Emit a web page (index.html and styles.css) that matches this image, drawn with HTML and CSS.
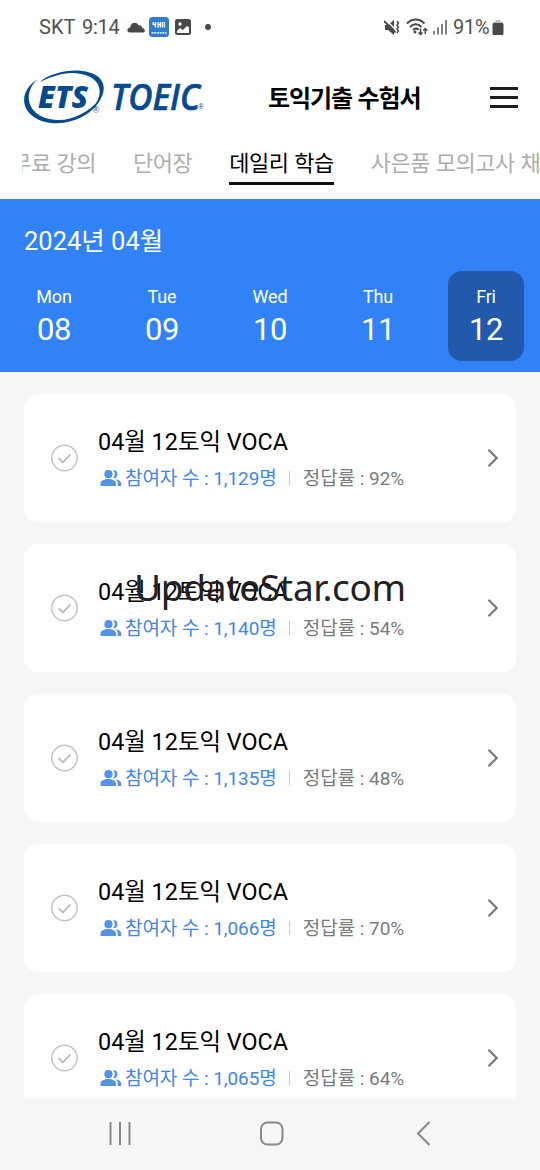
FILE: index.html
```html
<!DOCTYPE html>
<html lang="ko">
<head>
<meta charset="utf-8">
<title>토익기출 수험서</title>
<link rel="stylesheet" href="styles.css">
</head>
<body>
<svg class="defs" width="0" height="0">
  <symbol id="check" viewBox="0 0 28 28"><circle cx="14.500" cy="14" r="12.700" fill="none" stroke="#c2c5c7" stroke-width="1.500"/><path d="M8.700 14.200l4.200 4.200 7.600-8" fill="none" stroke="#bcc0c2" stroke-width="2"/></symbol>
  <symbol id="people" viewBox="0 0 22 16"><g fill="#5592ea"><circle cx="8.500" cy="4.200" r="4.100"/><path d="M.5 16v-2.500C.5 7.500 16 7.500 16 13.500V16zM13 .3c6-1.200 6 9 0 7.800 2.300-2.200 2.300-5.600 0-7.800zM15.500 9.300c3.400.5 5.700 2 5.700 4.200V16h-3.500v-2.500c0-1.700-.8-3.200-2.200-4.200z"/></g></symbol>
  <symbol id="next" viewBox="0 0 12 20"><path d="M1.500 1.800L9.700 10l-8.200 8.200" fill="none" stroke="#767a7d" stroke-width="2.200"/></symbol>
</svg>
<div class="screen">
  <div class="status">
    <span class="carrier">SKT</span><span class="clock">9:14</span>
    <svg class="cloud" width="18" height="11" viewBox="0 0 18 11"><path fill="#484848" d="M2.800 10.500C-.5 10.500-.5 6 3 5.700 3.500 1 9-1.300 11.500 3.200c2-.4 3.500.9 3.700 2.700 3.500.4 3.300 4.600.8 4.600z"/></svg>
    <svg class="appicon" width="20" height="20" viewBox="0 0 20 20"><rect width="20" height="20" rx="3.500" fill="#347bc9"/><path d="M4.200 5v2.500h2M6.500 5v5.500M9 5v5.500M9 7.700h2M11.300 5v5.500M13.300 5v5.500M15.300 5v5.500" fill="none" stroke="#fff" stroke-width="1.300"/><path d="M2.500 15.800h15" stroke="#d5e5f7" stroke-width="1.700" stroke-dasharray="2 .7"/></svg>
    <svg class="photo" width="16" height="16" viewBox="0 0 16 16"><rect x="1" y="1" width="14" height="14" rx="1.500" fill="#fff" stroke="#484848" stroke-width="2"/><path d="M1 1h14v8l-3-2-4 4-3-2-4 4z" fill="#484848"/><circle cx="5" cy="5" r="1.700" fill="#fff"/></svg>
    <span class="dot"></span>
    <span class="spacer"></span>
    <svg width="16" height="17" viewBox="0 0 16 17"><path d="M1 6h3l6-5v15l-6-5H1z" fill="#484848"/><path d="M2 1l11 11" stroke="#fff" stroke-width="1.500"/><path d="M0 2l11.500 11.500" stroke="#484848" stroke-width="1.800"/><path d="M13 2l1.500 2-1.500 2 1.500 2-1.500 2 1.500 2-1.500 2" fill="none" stroke="#484848" stroke-width="1.400"/></svg>
    <svg class="wifi" width="22" height="18" viewBox="0 0 22 18"><g fill="none" stroke="#484848" stroke-width="2"><path d="M1 5.500c5-5.300 12.500-5.300 17.500 0M4 9c3.500-3.700 8-3.700 11.500 0M7 12c2-1.700 4-1.700 5.500-.3"/><path d="M14.500 10.500v6m-2-2l2 2 2-2M19.300 16v-5.500m-2 2l2-2 2 2" stroke-width="1.500"/></g><circle cx="9" cy="14" r="1.500" fill="#484848"/></svg>
    <svg class="signal" width="14" height="16" viewBox="0 0 14 16"><path d="M1 12v3.500M5 8.500v7M9 5v10.500M13 1v14.500" stroke="#555" stroke-width="1.500"/></svg>
    <span class="percent">91%</span>
    <svg class="battery" width="12" height="17" viewBox="0 0 12 17"><path d="M3.500 1h5v2H11v3H1V3h2.500z" fill="#bbb"/><rect x=".5" y="4" width="11" height="12" rx="1.500" fill="#484848"/></svg>
  </div>
  <header class="header">
    <svg class="logo" width="184" height="56" viewBox="0 0 184 56">
      <g fill="#064a8e">
        <path d="M15 10C-7 23-3 50 28 54 52 56 72 43 78 29 65 44 49 52 33 51 3 49-1 23 15 10z"/>
        <path d="M17 13C25 5 46 0 59 2 81 4 87 20 74 35c-1 2-3 4-5 5C83 24 77 8 58 5 44 2 30 7 17 13z"/>
        <text class="logo-text" x="15" y="39" font-size="30" textLength="50" lengthAdjust="spacingAndGlyphs">ETS</text>
        <text class="logo-text toeic" x="88" y="41" font-size="36" textLength="89" lengthAdjust="spacingAndGlyphs">TOEIC</text>
        <text class="reg" x="69.500" y="43.500" font-size="9">®</text>
        <text class="reg" x="175" y="39.500" font-size="8">®</text>
      </g>
    </svg>
    <h1 class="title">토익기출 수험서</h1>
    <span class="menu"><i class="bar"></i><i class="bar"></i><i class="bar"></i></span>
  </header>
  <nav class="tabs"><span class="tab first">무료 강의</span><span class="tab">단어장</span><span class="tab active">데일리 학습</span><span class="tab">사은품 모의고사 채점</span></nav>
  <section class="calendar">
    <div class="month">2024년 04월</div>
    <div class="days">
      <div class="day"><span class="dow">Mon</span><span class="date">08</span></div>
      <div class="day"><span class="dow">Tue</span><span class="date">09</span></div>
      <div class="day"><span class="dow">Wed</span><span class="date">10</span></div>
      <div class="day"><span class="dow">Thu</span><span class="date">11</span></div>
      <div class="day selected"><span class="dow">Fri</span><span class="date">12</span></div>
    </div>
  </section>
  <main class="list">
    <article class="card"><svg class="check"><use href="#check"/></svg><div class="info"><div class="name">04월 12토익 VOCA</div><div class="meta"><svg class="people"><use href="#people"/></svg><span class="count">참여자 수 : 1,129명</span><i class="sep"></i><span class="rate">정답률 : 92%</span></div></div><svg class="next"><use href="#next"/></svg></article>
    <article class="card"><svg class="check"><use href="#check"/></svg><div class="info"><div class="name">04월 12토익 VOCA</div><div class="meta"><svg class="people"><use href="#people"/></svg><span class="count">참여자 수 : 1,140명</span><i class="sep"></i><span class="rate">정답률 : 54%</span></div></div><svg class="next"><use href="#next"/></svg></article>
    <article class="card"><svg class="check"><use href="#check"/></svg><div class="info"><div class="name">04월 12토익 VOCA</div><div class="meta"><svg class="people"><use href="#people"/></svg><span class="count">참여자 수 : 1,135명</span><i class="sep"></i><span class="rate">정답률 : 48%</span></div></div><svg class="next"><use href="#next"/></svg></article>
    <article class="card"><svg class="check"><use href="#check"/></svg><div class="info"><div class="name">04월 12토익 VOCA</div><div class="meta"><svg class="people"><use href="#people"/></svg><span class="count">참여자 수 : 1,066명</span><i class="sep"></i><span class="rate">정답률 : 70%</span></div></div><svg class="next"><use href="#next"/></svg></article>
    <article class="card"><svg class="check"><use href="#check"/></svg><div class="info"><div class="name">04월 12토익 VOCA</div><div class="meta"><svg class="people"><use href="#people"/></svg><span class="count">참여자 수 : 1,065명</span><i class="sep"></i><span class="rate">정답률 : 64%</span></div></div><svg class="next"><use href="#next"/></svg></article>
  </main>
  <footer class="navbar">
    <svg width="24" height="26" viewBox="0 0 24 26"><path d="M2.500 2v23M12 2v23M21.500 2v23" stroke="#888" stroke-width="2"/></svg>
    <svg width="24" height="26" viewBox="0 0 24 26"><rect x="1" y="2.500" width="21.500" height="22" rx="6.500" fill="none" stroke="#888" stroke-width="2"/></svg>
    <svg width="24" height="26" viewBox="0 0 24 26"><path d="M18.500 2L7 13.500l11.500 11.500" fill="none" stroke="#888" stroke-width="2"/></svg>
  </footer>
  <div class="watermark">UpdateStar.com</div>
</div>
</body>
</html>
```

FILE: styles.css
```css
* { box-sizing: border-box; }
body { margin: 0; font-family: Roboto, "Noto Sans CJK KR", sans-serif; background: #f6f6f6; }
svg { display: block; flex: none; }
.defs { position: absolute; }
.screen { position: relative; width: 540px; height: 1170px; overflow: hidden; display: flex; flex-direction: column; background: #f6f6f6; }
.status { height: 54px; flex: none; background: #fff; display: flex; align-items: center; padding: 0 36px 0 39px; font-size: 20px; line-height: 24px; color: #505050; }
.carrier { width: 43px; }
.clock { width: 45px; letter-spacing: -.3px; }
.cloud { margin-right: 4px; }
.photo { margin-left: 6px; }
.dot { width: 6px; height: 6px; border-radius: 50%; background: #484848; margin-left: 14px; }
.spacer { flex: 1; }
.wifi { margin-left: 6px; }
.signal { margin: 0 6px 0 5px; }
.percent { width: 39px; letter-spacing: -.3px; }
.header { height: 86px; flex: none; background: #fff; display: flex; align-items: center; padding: 0 22px 0 23px; }
.logo-text { font-family: "Open Sans", sans-serif; font-weight: 800; font-style: italic; }
.toeic { font-weight: 600; stroke: #064a8e; stroke-width: .6px; }
.reg { font-family: "Liberation Sans", sans-serif; }
.title { margin: 0 0 0 61px; font: 700 24px/36px "Noto Sans CJK KR", sans-serif; letter-spacing: -1.1px; white-space: nowrap; }
.menu { margin-left: auto; display: flex; flex-direction: column; gap: 6px; width: 28px; }
.bar { height: 3px; background: #1b1d20; }
.tabs { height: 59px; flex: none; background: #fff; display: flex; gap: 37px; padding-left: 22px; overflow: hidden; font: 400 22px/40px "Noto Sans CJK KR", sans-serif; color: #adadad; white-space: nowrap; }
.tab { height: 45px; flex: none; padding-top: 1px; letter-spacing: -.48px; }
.first { width: 74px; display: flex; justify-content: flex-end; overflow: hidden; }
.active { color: #000; border-bottom: 3px solid #111; }
.calendar { height: 173px; flex: none; background: #3182f7; color: #fff; padding: 26px 0 0; }
.month { font-size: 25.500px; line-height: 32px; padding-left: 24px; }
.days { display: flex; margin-top: 14px; }
.day { width: 76px; height: 90px; flex: none; display: flex; flex-direction: column; align-items: center; padding-top: 16px; margin: 0 16px; }
.selected { background: #2259ab; border-radius: 14px; }
.dow { font-size: 18px; line-height: 20px; letter-spacing: -.2px; }
.date { font-size: 31px; line-height: 36px; margin-top: 5px; letter-spacing: -.5px; }
.list { height: 726px; flex: none; overflow: hidden; padding: 22px 24px 0; display: flex; flex-direction: column; gap: 22px; }
.card { height: 128px; flex: none; background: #fff; border-radius: 14px; display: flex; align-items: center; padding: 0 17px 0 26px; }
.check { width: 28px; height: 28px; }
.info { margin-left: 20px; padding-top: 4px; flex: 1; }
.name { font-size: 23.400px; line-height: 34px; color: #000; margin-top: -2px; white-space: nowrap; }
.meta { display: flex; align-items: center; height: 28px; margin-top: 6px; font-size: 19px; line-height: 28px; white-space: nowrap; }
.people { width: 22px; height: 16px; margin: 0 3px 2px 2px; }
.count { color: #3e86e9; letter-spacing: -.06px; }
.sep { width: 1px; height: 14px; background: #c8cacc; margin: 0 13px 2px 12px; }
.rate { color: #777b7e; letter-spacing: -.03px; }
.next { width: 12px; height: 20px; }
.navbar { height: 72px; flex: none; display: flex; justify-content: space-between; padding: 22px 105px 0 108px; background: #f6f6f6; }
.watermark { position: absolute; left: 0; top: 562px; width: 540px; text-align: center; font: 400 37px/50px "Noto Sans", sans-serif; letter-spacing: -.3px; color: #222; }
```
